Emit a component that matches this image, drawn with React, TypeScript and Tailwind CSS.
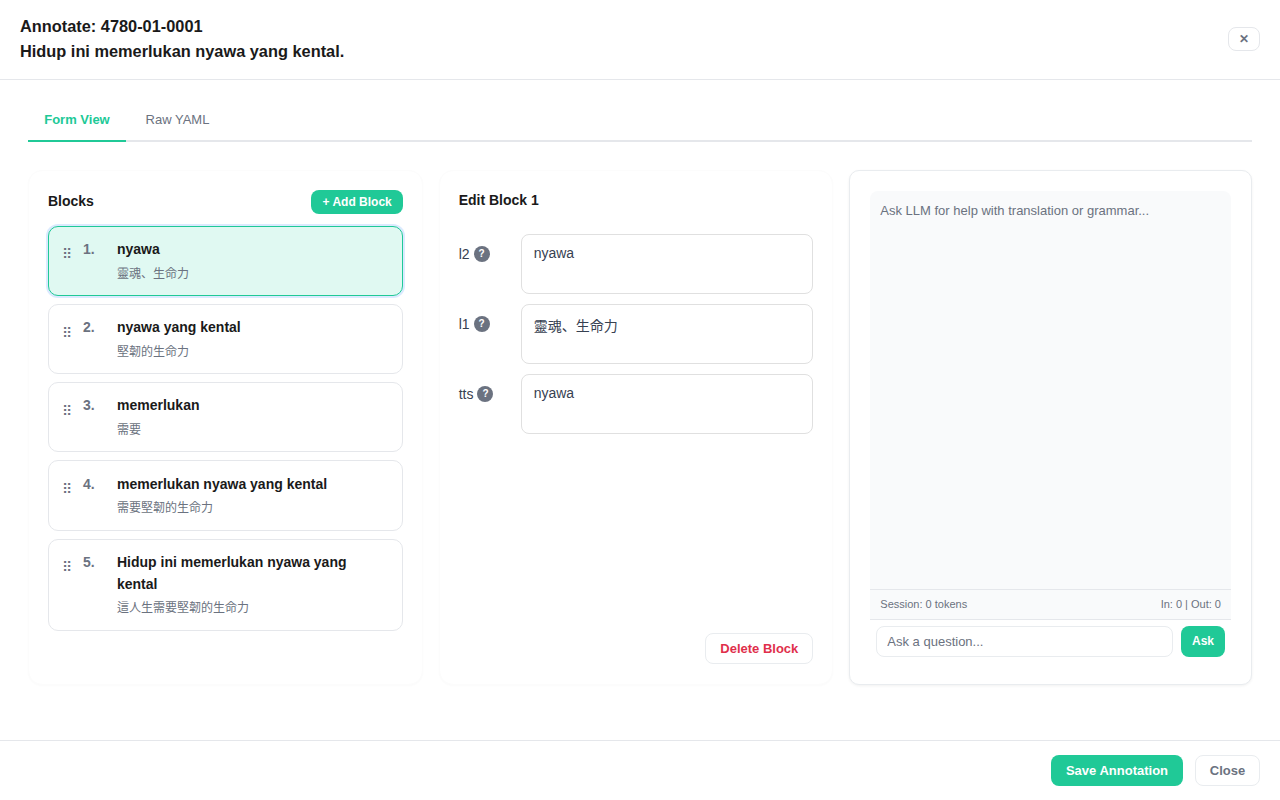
const font = { fontFamily: '"Liberation Sans", "Noto Sans CJK JP", sans-serif' };

const blocks = [
  { l2: "nyawa", l1: "靈魂、生命力" },
  { l2: "nyawa yang kental", l1: "堅韌的生命力" },
  { l2: "memerlukan", l1: "需要" },
  { l2: "memerlukan nyawa yang kental", l1: "需要堅韌的生命力" },
  { l2: "Hidup ini memerlukan nyawa yang kental", l1: "這人生需要堅韌的生命力" },
];

const fields = [
  { name: "l2", value: "nyawa" },
  { name: "l1", value: "靈魂、生命力" },
  { name: "tts", value: "nyawa" },
];

function DragHandle() {
  return (
    <span className="mt-[4.5px] w-[8px] shrink-0 text-[14px] leading-[22px] text-[#6b7280]" style={{ fontFamily: '"DejaVu Sans", sans-serif' }}>
      ⠿
    </span>
  );
}

function BlockRow({ index, l2, l1, active }: { index: number; l2: string; l1: string; active?: boolean }) {
  return (
    <div
      className={
        active
          ? "flex rounded-[10px] border border-[#20c997] bg-[#e0f9f2] pl-[13px] pr-[14px] pt-[12.2px] pb-[12.45px] shadow-[0_0_0_2px_#dbeafe]"
          : "flex rounded-[10px] border border-[#e5e7eb] bg-white pl-[13px] pr-[14px] pt-[12.2px] pb-[12.45px]"
      }
    >
      <DragHandle />
      <div className="ml-[13px] w-[34px] shrink-0 text-[14px] font-bold leading-[21.7px] text-[#6b7280]">{index}.</div>
      <div className="min-w-0 flex-1">
        <div className="text-[14px] font-bold leading-[21.7px] text-[#1a1a1a]">{l2}</div>
        <div className="mt-[3.95px] text-[12px] leading-[18px] text-[#6b7280]">{l1}</div>
      </div>
    </div>
  );
}

export default function App() {
  return (
    <div className="flex h-[800px] flex-col overflow-hidden bg-white" style={font}>
      <header className="flex h-[80px] shrink-0 items-center justify-between border-b border-[#e5e7eb] pb-[2px] pl-[20px] pr-[20px]">
        <div className="text-[16.35px] font-bold leading-[25px] text-[#1a1a1a]">
          <div>Annotate: 4780-01-0001</div>
          <div>Hidup ini memerlukan nyawa yang kental.</div>
        </div>
        <button className="flex h-[24px] w-[32px] items-center justify-center rounded-[8px] border border-[#e5e7eb] bg-white text-[12px] font-bold text-[#6b7280]">
          ✕
        </button>
      </header>

      <main className="flex-1 px-[28px] pt-[20px]">
        <div className="flex h-[42px] border-b-2 border-[#e5e7eb]">
          <div className="-mb-[2px] flex h-[42px] w-[98px] items-center justify-center border-b-2 border-[#20c997] text-[13px] font-bold text-[#20c997]">
            Form View
          </div>
          <div className="flex h-[40px] w-[103px] items-center justify-center text-[13px] text-[#6b7280]">
            Raw YAML
          </div>
        </div>

        <div className="mt-[28px] flex h-[515px] gap-[16px]">
          <section className="w-[394.67px] rounded-[14px] border border-[#fcfcfc] bg-white p-[19px] shadow-[0_1px_2px_rgba(0,0,0,0.02)]">
            <div className="flex h-[24px] items-center justify-between">
              <h2 className="-mt-[2px] text-[14px] font-bold text-[#1a1a1a]">Blocks</h2>
              <button className="flex h-[24px] w-[92px] items-center justify-center rounded-[8px] bg-[#20c997] pl-[1px] text-[12px] font-bold text-white">
                + Add Block
              </button>
            </div>
            <div className="mt-[11.7px] flex flex-col gap-[8px]">
              {blocks.map((b, i) => (
                <BlockRow key={i} index={i + 1} l2={b.l2} l1={b.l1} active={i === 0} />
              ))}
            </div>
          </section>

          <section className="flex w-[394.67px] flex-col rounded-[14px] border border-[#fcfcfc] bg-white p-[19px] shadow-[0_1px_2px_rgba(0,0,0,0.02)]">
            <h2 className="text-[14px] font-bold leading-[20px] text-[#1a1a1a]">Edit Block 1</h2>
            <div className="mt-[24px] flex flex-col gap-[10px]">
              {fields.map((f) => (
                <div key={f.name} className="flex">
                  <div className="flex w-[62px] shrink-0 items-start gap-[4px] pt-[10px] text-[14px] leading-[20px] text-[#374151]">
                    {f.name}
                    <span className="mt-[2px] flex h-[16px] w-[16px] items-center justify-center rounded-full bg-[#6b7280] text-[10px] font-bold text-white">
                      ?
                    </span>
                  </div>
                  <textarea
                    readOnly
                    defaultValue={f.value}
                    className="h-[60px] flex-1 resize-none rounded-[8px] border border-[#e0e0e0] px-[12px] py-[10px] text-[14px] leading-[normal] text-[#374151] outline-none"
                  />
                </div>
              ))}
            </div>
            <div className="mt-auto mb-[1px] flex justify-end">
              <button className="h-[31px] w-[108px] rounded-[8px] border border-[#e9ecef] bg-white text-[13px] font-bold text-[#e02f4b]">
                Delete Block
              </button>
            </div>
          </section>

          <section className="flex flex-1 flex-col rounded-[10px] border border-[#e9ecef] bg-white px-[20px] pt-[20px] pb-[27px] shadow-[0_1px_3px_rgba(0,0,0,0.06)]">
            <div className="flex-1 rounded-t-[8px] bg-[#f9fafb] px-[10px] py-[12px] text-[13px] leading-[15px] text-[#6b7280]">
              Ask LLM for help with translation or grammar...
            </div>
            <div className="flex h-[31px] items-center justify-between border-y border-[#e5e7eb] bg-[#f9fafb] px-[10px] text-[11px] text-[#6b7280]">
              <span>Session: 0 tokens</span>
              <span>In: 0 | Out: 0</span>
            </div>
            <div className="mt-[6px] flex gap-[8px] px-[6px]">
              <input
                readOnly
                placeholder="Ask a question..."
                className="h-[31px] flex-1 rounded-[8px] border border-[#e9ecef] px-[10px] text-[13px] text-[#374151] outline-none placeholder:text-[#6b7280]"
              />
              <button className="h-[31px] w-[44px] rounded-[8px] bg-[#20c997] pb-[2px] text-[12px] font-bold text-white">
                Ask
              </button>
            </div>
          </section>
        </div>
      </main>

      <footer className="flex h-[60px] shrink-0 items-center justify-end gap-[12px] border-t border-[#e5e7eb] pr-[20px]">
        <button className="h-[31px] w-[132px] rounded-[8px] bg-[#20c997] text-[13px] font-bold text-white">
          Save Annotation
        </button>
        <button className="h-[31px] w-[65px] rounded-[8px] border border-[#e9ecef] bg-white text-[13px] font-bold text-[#6b7280]">
          Close
        </button>
      </footer>
    </div>
  );
}
